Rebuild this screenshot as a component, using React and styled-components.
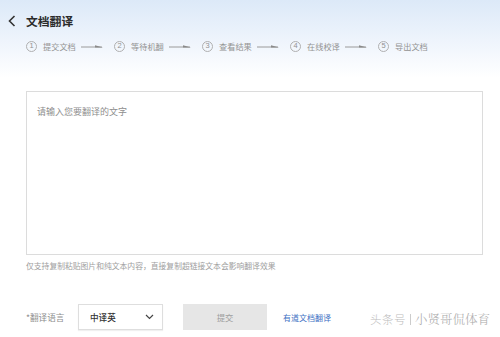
import React from 'react';
import styled, { createGlobalStyle } from 'styled-components';

const GlobalStyle = createGlobalStyle`
	html, body {
		margin: 0;
		padding: 0;
		background: #fff;
	}
	body {
		font-family: "Noto Sans CJK SC", "Noto Sans", sans-serif;
	}
`;

const steps = ['提交文档', '等待机翻', '查看结果', '在线校译', '导出文档'];

function StepArrow() {
	return (
		<svg width="22" height="6" viewBox="0 0 22 6">
			<line x1="0" y1="4" x2="21" y2="4" stroke="#9a9a9a" strokeWidth="1" />
			<polygon points="14,2.2 22,4.5 14,4.5" fill="#8a8a8a" />
		</svg>
	);
}

function App() {
	return (
		<Page>
			<GlobalStyle />
			<TitleRow>
				<BackButton>
					<svg width="8" height="12" viewBox="0 0 8 12">
						<polyline points="6.5,1 1.5,6 6.5,11" fill="none" stroke="#333" strokeWidth="1.6" />
					</svg>
				</BackButton>
				<Title>文档翻译</Title>
			</TitleRow>

			<Steps>
				{steps.map((label, i) => (
					<Step key={label}>
						<StepNum>{i + 1}</StepNum>
						<StepLabel>{label}</StepLabel>
						{i < steps.length - 1 && <StepArrow />}
					</Step>
				))}
			</Steps>

			<TextBox>
				<Placeholder>请输入您要翻译的文字</Placeholder>
			</TextBox>
			<Hint>仅支持复制粘贴图片和纯文本内容，直接复制超链接文本会影响翻译效果</Hint>

			<FormRow>
				<FieldLabel>*翻译语言</FieldLabel>
				<Select>
					<span>中译英</span>
					<svg width="9" height="6" viewBox="0 0 9 6">
						<polyline points="1,1 4.5,4.5 8,1" fill="none" stroke="#444" strokeWidth="1.2" />
					</svg>
				</Select>
				<SubmitButton>提交</SubmitButton>
				<DocLink>有道文档翻译</DocLink>
			</FormRow>

			<Watermark>
				<WatermarkBrand>头条号</WatermarkBrand>
				<WatermarkBar />
				<WatermarkName>小贤哥侃体育</WatermarkName>
			</Watermark>
		</Page>
	);
}

const Page = styled.div`
	position: relative;
	width: 500px;
	height: 337px;
	overflow: hidden;
	display: flex;
	flex-direction: column;
	background: linear-gradient(180deg, #dce9f8 0px, #eef4fc 40px, #ffffff 78px);
`;

const TitleRow = styled.div`
	display: flex;
	align-items: center;
	padding: 13px 0 0 8px;
	height: 16px;
`;

const BackButton = styled.div`
	width: 8px;
	height: 12px;
	display: flex;
	margin-right: 10px;
`;

const Title = styled.h1`
	margin: 0;
	font-size: 11.8px;
	line-height: 16px;
	font-weight: 700;
	color: #2b2b2b;
`;

const Steps = styled.div`
	display: flex;
	align-items: center;
	margin: 11px 0 0 26px;
	height: 12px;
`;

const Step = styled.div`
	display: flex;
	align-items: center;
	width: 88px;
	flex: none;

	svg {
		margin-left: 5px;
	}
`;

const StepNum = styled.span`
	width: 11px;
	height: 11px;
	box-sizing: border-box;
	border: 1px solid #b0b0b0;
	border-radius: 50%;
	display: flex;
	align-items: center;
	justify-content: center;
	font-size: 7.5px;
	line-height: 1;
	color: #929292;
	font-family: "Liberation Sans", sans-serif;
`;

const StepLabel = styled.span`
	margin-left: 6px;
	font-size: 8.2px;
	line-height: 12px;
	color: #939393;
	white-space: nowrap;
`;

const TextBox = styled.div`
	box-sizing: border-box;
	margin: 39px 17px 0 26px;
	height: 164px;
	border: 1px solid #dcdcdc;
	background: #fff;
	padding: 14px 10px;
`;

const Placeholder = styled.div`
	font-size: 9px;
	line-height: 12px;
	color: #8e8e8e;
`;

const Hint = styled.div`
	margin: 6px 0 0 26px;
	font-size: 7.8px;
	line-height: 10px;
	color: #9e9e9e;
	white-space: nowrap;
`;

const FormRow = styled.div`
	display: flex;
	align-items: center;
	margin: 33px 0 0 26px;
	height: 26px;
`;

const FieldLabel = styled.span`
	font-size: 8.6px;
	color: #8e8e8e;
	width: 52px;
	flex: none;
`;

const Select = styled.div`
	box-sizing: border-box;
	width: 85px;
	height: 26px;
	display: flex;
	align-items: center;
	justify-content: space-between;
	padding: 0 8px 0 11px;
	border: 1px solid #dedede;
	box-shadow: 0 1px 1px rgba(0, 0, 0, 0.06);
	background: #fff;
	font-size: 8.6px;
	font-weight: 500;
	color: #333;
`;

const SubmitButton = styled.div`
	margin-left: 20px;
	width: 84px;
	height: 26px;
	display: flex;
	align-items: center;
	justify-content: center;
	background: #e6e6e6;
	font-size: 8.4px;
	color: #9e9e9e;
`;

const DocLink = styled.span`
	margin-left: 16px;
	font-size: 8px;
	color: #3f72c4;
`;

const Watermark = styled.div`
	position: absolute;
	right: 10px;
	bottom: 9px;
	display: flex;
	align-items: center;
	color: #bcbcbc;
`;

const WatermarkBrand = styled.span`
	font-size: 11.5px;
	font-weight: 300;
	letter-spacing: 0.5px;
`;

const WatermarkBar = styled.span`
	width: 1px;
	height: 11px;
	background: #cccccc;
	margin: 0 4px;
`;

const WatermarkName = styled.span`
	font-size: 12.5px;
	font-weight: 300;
	color: #ababab;
	font-family: "Noto Serif CJK SC", "Noto Sans CJK SC", serif;
`;

export default App;
